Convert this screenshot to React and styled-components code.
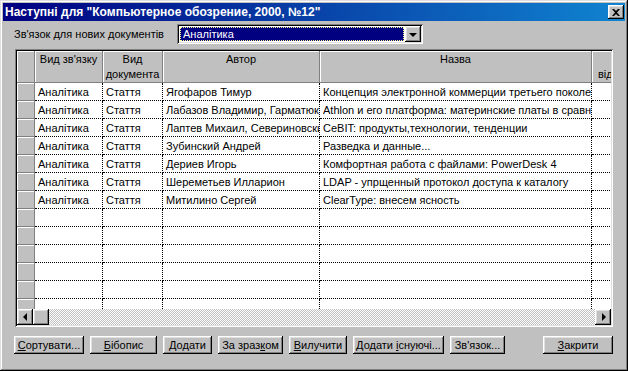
import React from 'react';
import styled, { createGlobalStyle } from 'styled-components';

const Global = createGlobalStyle`
  html, body { margin: 0; padding: 0; background: #c0c0c0; }
  body { font-family: "Liberation Sans", Arial, sans-serif; font-size: 11px; color: #000; }
  * { box-sizing: border-box; }
`;

const raised = `
  background: #c0c0c0;
  box-shadow: inset -1px -1px #000, inset 1px 1px #fff, inset -2px -2px #808080, inset 2px 2px #dfdfdf;
`;
const sunken = `
  box-shadow: inset 1px 1px #808080, inset -1px -1px #fff, inset 2px 2px #000, inset -2px -2px #dfdfdf;
`;

const Window = styled.div`
  width: 628px;
  height: 371px;
  padding: 3px;
  background: #c0c0c0;
  box-shadow: inset -1px -1px #000, inset 1px 1px #dfdfdf, inset -2px -2px #808080, inset 2px 2px #fff;
  display: flex;
  flex-direction: column;
`;

const TitleBar = styled.div`
  height: 18px;
  display: flex;
  align-items: center;
  justify-content: space-between;
  padding: 0 1px 0 2px;
  background: linear-gradient(90deg, #000080 0%, #1084d0 100%);
`;

const Title = styled.span`
  color: #fff;
  font-weight: bold;
  font-size: 12px;
  white-space: nowrap;
`;

const CloseBtn = styled.div`
  ${raised}
  width: 16px;
  height: 14px;
  display: flex;
  align-items: center;
  justify-content: center;
`;

const Content = styled.div`
  flex: 1;
  display: flex;
  flex-direction: column;
  padding: 0 12px;
`;

const TopRow = styled.div`
  margin-top: 3px;
  height: 20px;
  display: flex;
  align-items: center;
`;

const Label = styled.span`
  width: 163px;
  margin-left: -1px;
  white-space: nowrap;
`;

const Combo = styled.div`
  ${sunken}
  background: #fff;
  width: 246px;
  height: 20px;
  padding: 2px;
  display: flex;
`;

const Selection = styled.div`
  flex: 1;
  margin: 1px;
  background: #000080;
  color: #fff;
  border: 1px dotted #ffff90;
  padding-left: 2px;
  line-height: 12px;
  white-space: nowrap;
`;

const SmallBtn = styled.div`
  ${raised}
  width: 16px;
  height: 16px;
  display: flex;
  align-items: center;
  justify-content: center;
  flex: none;
`;

const Arrow = styled.span`
  width: 0;
  height: 0;
  border-style: solid;
  border-color: transparent;
  ${p => p.$dir === 'down' && `border-width: 4px 4px 0 4px; border-top-color: #000; margin-top: 1px;`}
  ${p => p.$dir === 'left' && `border-width: 4px 4px 4px 0; border-right-color: #000;`}
  ${p => p.$dir === 'right' && `border-width: 4px 0 4px 4px; border-left-color: #000; margin-left: 1px;`}
`;

const GridFrame = styled.div`
  ${sunken}
  background: #fff;
  margin-top: 5px;
  height: 278px;
  padding: 2px;
  display: flex;
  flex-direction: column;
`;

const GridInner = styled.div`
  flex: 1;
  display: flex;
  flex-direction: column;
  overflow: hidden;
`;

const Row = styled.div`
  display: flex;
  flex: none;
  height: ${p => p.$h}px;
`;

const HeadCell = styled.div`
  flex: none;
  width: ${p => p.$w}px;
  background: #c0c0c0;
  box-shadow: inset 1px 1px #fff;
  border-right: 1px solid #808080;
  border-bottom: 1px solid #808080;
  text-align: ${p => p.$left ? 'left' : 'center'};
  padding: ${p => p.$left ? '1px 0 0 6px' : '1px 0 0 0'};
  line-height: 15px;
  overflow: hidden;
  white-space: pre;
`;

const IndCell = styled.div`
  flex: none;
  width: ${p => p.$w}px;
  background: #c0c0c0;
  box-shadow: inset 1px 1px #fff;
  border-right: 1px solid #808080;
  border-bottom: 1px solid #808080;
`;

const Cell = styled.div`
  flex: none;
  width: ${p => p.$w}px;
  border-right: 1px dotted #000;
  border-bottom: 1px dotted #000;
  padding: 1px 0 0 3px;
  line-height: 16px;
  white-space: nowrap;
  overflow: hidden;
`;

const Body = styled.div`
  flex: 1;
  overflow: hidden;
`;

const ScrollBar = styled.div`
  height: 16px;
  flex: none;
  display: flex;
`;

const Track = styled.div`
  flex: 1;
  background: repeating-conic-gradient(#c0c0c0 0 25%, #fff 0 50%) 0 0 / 2px 2px;
`;

const ButtonRow = styled.div`
  margin-top: 9px;
  margin-left: -1px;
  display: flex;
  gap: 6px;
`;

const Button = styled.div`
  ${raised}
  width: ${p => p.$w}px;
  height: 18px;
  display: flex;
  align-items: center;
  justify-content: center;
  white-space: nowrap;
  ${p => p.$push && 'margin-left: auto;'}
`;

const widths = [18, 68, 60, 157, 272, 80];

const headers = ["Вид зв'язку", "Вид\nдокумента", 'Автор', 'Назва'];

const data = [
  ['Ягофаров Тимур', 'Концепция электронной коммерции третьего поколения'],
  ['Лабазов Владимир, Гарматюк Сергей', 'Athlon и его платформа: материнские платы в сравнении'],
  ['Лаптев Михаил, Севериновский Олег', 'CeBIT: продукты,технологии, тенденции'],
  ['Зубинский Андрей', 'Разведка и данные...'],
  ['Дериев Игорь', 'Комфортная работа с файлами: PowerDesk 4'],
  ['Шереметьев Илларион', 'LDAP - упрщенный протокол доступа к каталогу'],
  ['Митилино Сергей', 'ClearType: внесем ясность'],
];

const rows = [
  ...data.map(([a, t]) => ['Аналітика', 'Стаття', a, t, '']),
  ...Array.from({ length: 6 }, () => ['', '', '', '', '']),
];

export default function App() {
  return (
    <>
      <Global />
      <Window>
        <TitleBar>
          <Title>Наступні для "Компьютерное обозрение, 2000, №12"</Title>
          <CloseBtn>
            <svg width="8" height="7" viewBox="0 0 8 7">
              <path d="M0 0h2l2 2 2-2h2L5 3.5 8 7H6L4 5 2 7H0l3-3.5z" fill="#000" />
            </svg>
          </CloseBtn>
        </TitleBar>
        <Content>
          <TopRow>
            <Label>Зв'язок для нових документів</Label>
            <Combo>
              <Selection>Аналітика</Selection>
              <SmallBtn><Arrow $dir="down" /></SmallBtn>
            </Combo>
          </TopRow>
          <GridFrame>
            <GridInner>
              <Row $h={32}>
                <HeadCell $w={widths[0]} />
                {headers.map((h, i) => (
                  <HeadCell key={i} $w={widths[i + 1]}>{h}</HeadCell>
                ))}
                <HeadCell $w={widths[5]} $left>{'\u00a0\nвідділ'}</HeadCell>
              </Row>
              <Body>
                {rows.map((r, i) => (
                  <Row key={i} $h={18}>
                    <IndCell $w={widths[0]} />
                    {r.map((c, j) => (
                      <Cell key={j} $w={widths[j + 1]}>{c}</Cell>
                    ))}
                  </Row>
                ))}
              </Body>
              <ScrollBar>
                <SmallBtn><Arrow $dir="left" /></SmallBtn>
                <SmallBtn />
                <Track />
                <SmallBtn><Arrow $dir="right" /></SmallBtn>
              </ScrollBar>
            </GridInner>
          </GridFrame>
          <ButtonRow>
            <Button $w={70}><span><u>С</u>ортувати...</span></Button>
            <Button $w={67}><span><u>Б</u>ібопис</span></Button>
            <Button $w={49}><span><u>Д</u>одати</span></Button>
            <Button $w={65}><span>За зраз<u>к</u>ом</span></Button>
            <Button $w={58}><span><u>В</u>илучити</span></Button>
            <Button $w={91}><span>Додати <u>і</u>снуючі...</span></Button>
            <Button $w={55}><span>Зв'язок...</span></Button>
            <Button $w={70} $push><span><u>З</u>акрити</span></Button>
          </ButtonRow>
        </Content>
      </Window>
    </>
  );
}
